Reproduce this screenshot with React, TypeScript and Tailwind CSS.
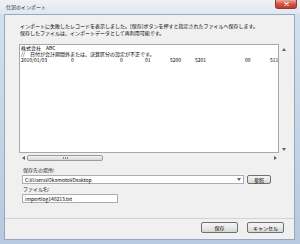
const Tri = ({ dir }: { dir: "up" | "down" | "left" | "right" }) => {
  const pts =
    dir === "up"
      ? "0,3 2,0 4,3"
      : dir === "down"
      ? "0,0 4,0 2,3"
      : dir === "left"
      ? "3,0 3,4 0,2"
      : "0,0 0,4 3,2";
  const w = dir === "up" || dir === "down" ? 4 : 3;
  const h = dir === "up" || dir === "down" ? 3 : 4;
  return (
    <svg width={w} height={h} viewBox={`0 0 ${w} ${h}`} className="block">
      <polygon points={pts} fill="#606060" />
    </svg>
  );
};

const WinButton = ({ label, cls }: { label: string; cls: string }) => (
  <div
    className={`flex items-center justify-center rounded-[2px] border border-[#707070] bg-gradient-to-b from-[#f4f4f4] via-[#e9e9e9] to-[#d6d6d6] leading-[6px] ${cls}`}
  >
    {label}
  </div>
);

export default function App() {
  return (
    <div className="w-[300px] h-[244px] flex flex-col overflow-hidden bg-gradient-to-b from-[#d6e1ee] to-[#b7c9de] font-['Noto_Sans_CJK_JP','Liberation_Sans',sans-serif] text-[5px] text-black">
      {/* Title bar */}
      <div className="h-[14px] shrink-0 flex items-start justify-between bg-gradient-to-b from-[#eef2f7] to-[#dfe7f1]">
        <span className="ml-[6px] mt-[4px] leading-[6px] text-[#1a1a1a]">仕訳のインポート</span>
        <div className="mr-[3px] w-[22px] h-[9px] rounded-b-[3px] border border-t-0 border-[#8c3b32] bg-gradient-to-b from-[#eaa79a] via-[#d45546] to-[#c0392b] flex items-center justify-center">
          <svg width="5" height="4" viewBox="0 0 5 4" className="block">
            <path d="M0.5 0.5 L4.5 3.5 M4.5 0.5 L0.5 3.5" stroke="#ffffff" strokeWidth="1.2" />
          </svg>
        </div>
      </div>

      {/* Middle */}
      <div className="flex-1 min-h-0 flex">
        <div className="w-[4px] shrink-0" />
        <div className="flex-1 min-w-0 flex flex-col bg-[#f0f0f0] border border-[#95a8be]">
          {/* message */}
          <div className="ml-[15px] mt-[7px] leading-[7px] whitespace-nowrap">
            <div>インポートに失敗したレコードを表示しました。[保存]ボタンを押すと指定されたファイルへ保存します。</div>
            <div>保存したファイルは、インポートデータとして再利用可能です。</div>
          </div>

          {/* grid box */}
          <div className="ml-[14px] mt-[8px] w-[269px] h-[118px] flex flex-col shrink-0">
            <div className="flex h-[109px]">
              <div className="w-[260px] h-[109px] bg-white border border-[#a3a9b1] overflow-hidden leading-[6px] whitespace-nowrap pl-[1px]">
                <div>株式会社　ABC</div>
                <div>//　日付が会計期間外または、決算区分の設定が不正です。</div>
                <div className="flex">
                  <span className="w-[50px] shrink-0">2010/01/03</span>
                  <span className="w-[49px] shrink-0">0</span>
                  <span className="w-[25px] shrink-0">0</span>
                  <span className="w-[25px] shrink-0">01</span>
                  <span className="w-[25px] shrink-0">5200</span>
                  <span className="w-[50px] shrink-0">5201</span>
                  <span className="w-[25px] shrink-0">00</span>
                  <span className="w-[25px] shrink-0">511</span>
                </div>
              </div>
              <div className="w-[9px] flex flex-col items-center justify-between pt-[4px] pb-[2px]">
                <Tri dir="up" />
                <Tri dir="down" />
              </div>
            </div>
            <div className="flex items-center h-[9px] w-[260px]">
              <div className="w-[8px] flex justify-center">
                <Tri dir="left" />
              </div>
              <div className="w-[76px] h-[6px] rounded-[2px] border border-[#9c9c9c] bg-gradient-to-b from-[#f3f3f3] to-[#d9d9d9] flex items-center justify-center">
                <div className="flex gap-[1px]">
                  <div className="w-[1px] h-[2px] bg-[#8a8a8a]" />
                  <div className="w-[1px] h-[2px] bg-[#8a8a8a]" />
                  <div className="w-[1px] h-[2px] bg-[#8a8a8a]" />
                </div>
              </div>
              <div className="flex-1" />
              <div className="w-[8px] flex justify-center">
                <Tri dir="right" />
              </div>
            </div>
          </div>

          {/* save location */}
          <div className="ml-[18px] mt-[4px] leading-[7px] text-[#1a1a1a]">保存先の場所:</div>
          <div className="ml-[17px] mt-[2px] flex items-center">
            <div className="w-[222px] h-[9px] bg-white border border-[#abadb3] flex items-center justify-between pl-[2px] pr-[2px] leading-[6px]">
              <span>C:¥Users¥Okamoto¥Desktop</span>
              <Tri dir="down" />
            </div>
            <WinButton label="参照" cls="ml-[3px] w-[24px] h-[9px]" />
          </div>

          {/* file name */}
          <div className="ml-[18px] mt-[1px] leading-[7px] text-[#1a1a1a]">ファイル名:</div>
          <div className="ml-[17px] mt-[2px] w-[96px] h-[9px] bg-white border border-[#abadb3] flex items-center pl-[2px] leading-[6px]">
            importlog140213.txt
          </div>

          <div className="flex-1" />

          {/* bottom button area */}
          <div className="h-[21px] shrink-0 border-t border-[#d3d3d3] flex items-start justify-end pt-[3px] pr-[10px] gap-[9px]">
            <WinButton label="保存" cls="w-[37px] h-[11px] border-[#3c7fb1]" />
            <WinButton label="キャンセル" cls="w-[37px] h-[11px]" />
          </div>
        </div>
        <div className="w-[5px] shrink-0" />
      </div>
      <div className="h-[4px] shrink-0" />
    </div>
  );
}
